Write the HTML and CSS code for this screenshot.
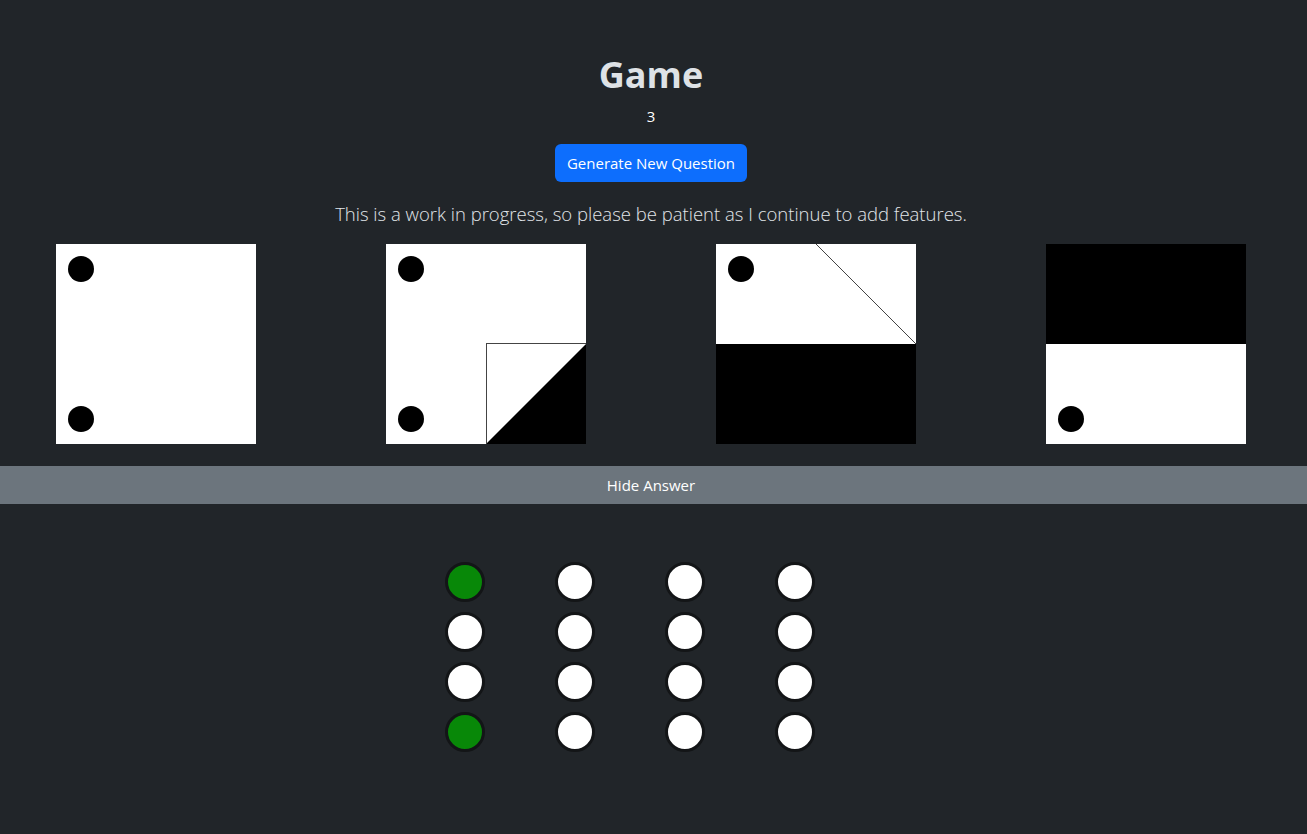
FILE: index.html
```html
<!DOCTYPE html>
<html lang="en">
<head>
<meta charset="utf-8">
<title>Game</title>
<link rel="stylesheet" href="styles.css">
</head>
<body>
<main class="page">
  <header class="head">
    <h1 class="title">Game</h1>
    <div class="score">3</div>
    <button class="btn-primary" type="button">Generate New Question</button>
    <p class="lead">This is a work in progress, so please be patient as I continue to add features.</p>
  </header>

  <section class="cards">
    <svg class="card" viewBox="0 0 200 200" width="200" height="200">
      <rect width="200" height="200" fill="#fff"/>
      <circle cx="25" cy="25" r="13" fill="#000"/>
      <circle cx="25" cy="175" r="13" fill="#000"/>
    </svg>
    <svg class="card" viewBox="0 0 200 200" width="200" height="200">
      <rect width="200" height="200" fill="#fff"/>
      <circle cx="25" cy="25" r="13" fill="#000"/>
      <circle cx="25" cy="175" r="13" fill="#000"/>
      <polygon points="100,200 200,100 200,200" fill="#000"/>
      <rect x="100.5" y="99.5" width="100" height="101" fill="none" stroke="#444" stroke-width="1"/>
    </svg>
    <svg class="card" viewBox="0 0 200 200" width="200" height="200">
      <rect width="200" height="200" fill="#fff"/>
      <rect y="100" width="200" height="100" fill="#000"/>
      <circle cx="25" cy="25" r="13" fill="#000"/>
      <line x1="100" y1="0" x2="200" y2="100" stroke="#444" stroke-width="1"/>
    </svg>
    <svg class="card" viewBox="0 0 200 200" width="200" height="200">
      <rect width="200" height="200" fill="#fff"/>
      <rect width="200" height="100" fill="#000"/>
      <circle cx="25" cy="175" r="13" fill="#000"/>
    </svg>
  </section>

  <button class="btn-secondary" type="button">Hide Answer</button>

  <section class="answers">
    <div class="dots">
      <span class="dot on"></span><span class="dot"></span><span class="dot"></span><span class="dot"></span>
      <span class="dot"></span><span class="dot"></span><span class="dot"></span><span class="dot"></span>
      <span class="dot"></span><span class="dot"></span><span class="dot"></span><span class="dot"></span>
      <span class="dot on"></span><span class="dot"></span><span class="dot"></span><span class="dot"></span>
    </div>
  </section>
</main>
</body>
</html>
```

FILE: styles.css
```css
* { box-sizing: border-box; }

html, body {
  margin: 0;
  padding: 0;
  background: #212529;
  color: #dee2e6;
  font-family: "Open Sans", "Noto Sans", sans-serif;
  font-size: 16px;
}

.page {
  min-height: 834px;
  display: flex;
  flex-direction: column;
}

.head {
  display: flex;
  flex-direction: column;
  align-items: center;
  padding-top: 50px;
  padding-right: 5px;
}

.title {
  margin: 0;
  font-size: 36px;
  font-weight: 700;
  line-height: 50px;
  color: #dee2e6;
}

.score {
  margin-top: 4px;
  font-size: 15px;
  line-height: 24px;
  color: #fff;
}

.btn-primary {
  margin-top: 16px;
  height: 38px;
  padding: 0 12px;
  border: 0;
  border-radius: 6px;
  background: #0d6efd;
  color: #fff;
  font-family: inherit;
  font-size: 15px;
}

.lead {
  margin: 18px 0 0;
  font-size: 18.5px;
  font-weight: 300;
  line-height: 28px;
  color: #e2e6ea;
}

.cards {
  display: flex;
  gap: 130px;
  padding-left: 56px;
  margin-top: 16px;
}

.card {
  display: block;
  flex: none;
}

.btn-secondary {
  display: block;
  width: 100%;
  margin-top: 22px;
  height: 38px;
  padding: 0 5px 0 0;
  border: 0;
  background: #6c757d;
  color: #fff;
  font-family: inherit;
  font-size: 15px;
}

.answers {
  display: flex;
  justify-content: center;
  padding-top: 58px;
}

.dots {
  display: grid;
  grid-template-columns: repeat(4, 40px);
  column-gap: 70px;
  row-gap: 10px;
  margin-left: -48px;
}

.dot {
  width: 40px;
  height: 40px;
  border-radius: 50%;
  background: #fff;
  border: 3px solid #131517;
}

.dot.on {
  background: #088808;
}
```
